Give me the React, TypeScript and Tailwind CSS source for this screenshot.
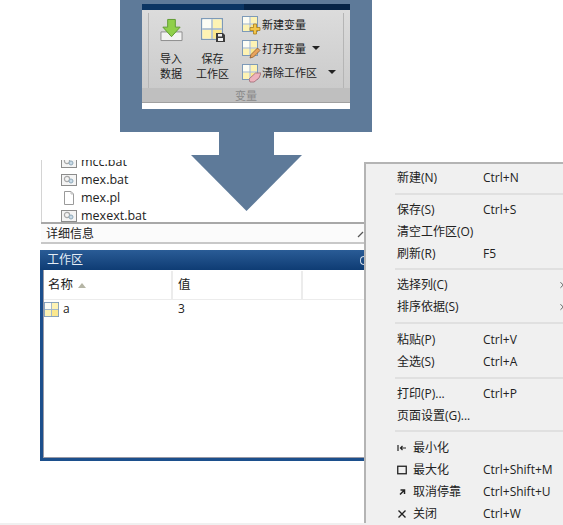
import { ChevronRight } from "lucide-react";

const cjk = "font-['Open_Sans','Noto_Sans_CJK_SC',sans-serif]";

const menuGroups = [
  { gap: "my-[4px]", items: [{ label: "新建(N)", key: "Ctrl+N" }] },
  {
    gap: "mt-[3px] mb-[4px]",
    items: [
      { label: "保存(S)", key: "Ctrl+S" },
      { label: "清空工作区(O)" },
      { label: "刷新(R)", key: "F5" },
    ],
  },
  {
    gap: "mt-[4px] mb-[5px]",
    items: [
      { label: "选择列(C)", arrow: true },
      { label: "排序依据(S)", arrow: true },
    ],
  },
  {
    gap: "my-[4px]",
    items: [
      { label: "粘贴(P)", key: "Ctrl+V" },
      { label: "全选(S)", key: "Ctrl+A" },
    ],
  },
  {
    gap: "mt-[3px] mb-[5px]",
    items: [
      { label: "打印(P)...", key: "Ctrl+P" },
      { label: "页面设置(G)..." },
    ],
  },
];

const windowItems = [
  { label: "最小化", icon: "min" },
  { label: "最大化", key: "Ctrl+Shift+M", icon: "max" },
  { label: "取消停靠", key: "Ctrl+Shift+U", icon: "undock" },
  { label: "关闭", key: "Ctrl+W", icon: "close" },
];

function GridIcon({ size = 16 }: { size?: number }) {
  return (
    <svg width={size} height={size} viewBox="0 0 16 16" className="shrink-0">
      <rect x="0.5" y="0.5" width="15" height="15" fill="#fff" stroke="#7d9ab8" />
      <rect x="1" y="1" width="6.5" height="6.5" fill="#fdfdf4" />
      <rect x="8.5" y="1" width="6.5" height="6.5" fill="#fdf3b4" />
      <rect x="1" y="8.5" width="6.5" height="6.5" fill="#fdf3b4" />
      <rect x="8.5" y="8.5" width="6.5" height="6.5" fill="#fbe88e" />
      <path d="M8 1V15M1 8H15" stroke="#9fb4c8" strokeWidth="1" />
    </svg>
  );
}

function FileIcon({ kind }: { kind: "bat" | "plain" }) {
  if (kind === "plain") {
    return (
      <svg width="16" height="16" viewBox="0 0 16 16">
        <path d="M3.5 1.5H10L12.5 4V14.5H3.5Z" fill="#fff" stroke="#9a9a9a" />
        <path d="M10 1.5V4H12.5" fill="none" stroke="#bdbdbd" />
      </svg>
    );
  }
  return (
    <svg width="16" height="16" viewBox="0 0 16 16">
      <rect x="0.5" y="2.5" width="15" height="11" fill="#f4f4f4" stroke="#8c8c8c" />
      <circle cx="6" cy="7" r="2.6" fill="none" stroke="#a8a8a8" strokeWidth="1.2" />
      <circle cx="10" cy="9" r="2" fill="#c9dbe8" stroke="#8fa9ba" />
    </svg>
  );
}

function WindowGlyph({ name }: { name: string }) {
  if (name === "min") {
    return (
      <svg width="10" height="10" viewBox="0 0 10 10">
        <path d="M1 2V8M9 5H3.5M5.5 3L3.5 5L5.5 7" fill="none" stroke="#222" strokeWidth="1.2" />
      </svg>
    );
  }
  if (name === "max") {
    return (
      <svg width="10" height="10" viewBox="0 0 10 10">
        <rect x="0.75" y="1.25" width="8.5" height="7.5" fill="none" stroke="#222" strokeWidth="1.3" />
      </svg>
    );
  }
  if (name === "undock") {
    return (
      <svg width="10" height="10" viewBox="0 0 10 10">
        <path d="M3.5 3H7.5V7M7 3.5L3 7.5" fill="none" stroke="#222" strokeWidth="1.5" />
      </svg>
    );
  }
  return (
    <svg width="10" height="10" viewBox="0 0 10 10">
      <path d="M1.5 1.5L8.5 8.5M8.5 1.5L1.5 8.5" fill="none" stroke="#222" strokeWidth="1.4" />
    </svg>
  );
}

function Caret() {
  return <span className="h-0 w-0 border-x-[4px] border-t-[4px] border-x-transparent border-t-[#222]" />;
}

function ToolRow({ label, badge, caretGap }: { label: string; badge: "add" | "pen" | "erase"; caretGap?: string }) {
  return (
    <div className="flex h-[24px] items-center">
      <div className="relative mr-[4px] h-[16px] w-[16px]">
        <GridIcon />
        <svg width="12" height="12" viewBox="0 0 12 12" className="absolute -bottom-[3px] -right-[3px]">
          {badge === "add" && <path d="M4.5 1H7.5V4.5H11V7.5H7.5V11H4.5V7.5H1V4.5H4.5Z" fill="#f3c64a" stroke="#a87f1c" strokeWidth="0.8" />}
          {badge === "pen" && <path d="M1 11L2 7.5L8.5 1L11 3.5L4.5 10Z" fill="#e8a35c" stroke="#8d5a2b" strokeWidth="0.8" />}
          {badge === "erase" && <path d="M0 8L6.5 2H12L10 7L5 11H1Z" fill="#eeb2bd" stroke="#a06a75" strokeWidth="0.8" />}
        </svg>
      </div>
      <span className="text-[11px] leading-none text-[#222]">{label}</span>
      {caretGap && <span className={`flex ${caretGap}`}><Caret /></span>}
    </div>
  );
}

function Ribbon() {
  return (
    <div className={`${cjk} flex h-[105px] w-[208px] flex-col bg-white`}>
      <div className="flex h-[6px] shrink-0">
        <div className="w-[102px] bg-[#0b3563]" />
        <div className="flex-1 bg-[#062447]" />
      </div>
      <div className="flex h-[78px] shrink-0 bg-gradient-to-b from-[#dcdcdc] to-[#cbcbcb] px-[6px] pt-[3px]">
        <div className="flex h-full flex-1 border-x border-[#b5b5b5]">
          <div className="flex w-[44px] flex-col items-center pt-[5px]">
            <svg width="23" height="24" viewBox="0 0 24 24">
              <path d="M1 14H23V23H1Z" fill="#f2f2f2" stroke="#8c8c8c" />
              <path d="M8 1H16V9H21L12 19L3 9H8Z" fill="#8fcf4a" stroke="#5e9a30" />
            </svg>
            <div className="mt-[9px] text-center text-[11px] leading-[15px] text-[#222]">导入<br />数据</div>
          </div>
          <div className="flex w-[39px] flex-col items-center pt-[5px]">
            <div className="relative h-[23px] w-[23px]">
              <GridIcon size={22} />
              <svg width="9" height="9" viewBox="0 0 9 9" className="absolute -bottom-[1px] -right-[1px]">
                <path d="M0 0H7L9 2V9H0Z" fill="#3c3c3c" />
                <rect x="2" y="1" width="4" height="2.5" fill="#eee" />
                <rect x="2" y="5" width="5" height="3" fill="#eee" />
              </svg>
            </div>
            <div className="mt-[10px] whitespace-nowrap text-center text-[11px] leading-[15px] text-[#222]">保存<br />工作区</div>
          </div>
          <div className="-mt-[1px] flex flex-col pl-[10px]">
            <ToolRow label="新建变量" badge="add" />
            <ToolRow label="打开变量" badge="pen" caretGap="ml-[6px]" />
            <ToolRow label="清除工作区" badge="erase" caretGap="ml-[11px]" />
          </div>
        </div>
      </div>
      <div className="flex h-[15px] shrink-0 items-center justify-center border-b border-[#a0a0a0] bg-[#bfbfbf] text-[11px] leading-none text-[#8a8a8a]">
        变量
      </div>
    </div>
  );
}

function Arrow() {
  return (
    <div className="absolute left-[120px] top-0 flex w-[252px] flex-col items-center">
      <div className="flex h-[132px] w-full justify-center bg-[#5e7a99] pt-[4px]">
        <Ribbon />
      </div>
      <div className="h-[23px] w-[55px] bg-[#5e7a99]" />
      <svg width="111" height="56" viewBox="0 0 111 56" className="block">
        <path d="M0 0H111L55.5 56Z" fill="#5e7a99" />
      </svg>
    </div>
  );
}

function Workspace() {
  return (
    <div className="mt-[6px] -ml-[1px] flex h-[211px] flex-col border-b-[3px] border-l-[3px] border-[#1c4f8c]">
      <div className="-ml-[3px] flex h-[20px] shrink-0 items-center justify-between bg-gradient-to-b from-[#2a5c96] to-[#0e3c74] pl-[4px] text-[12px] leading-none text-[#e6edf5]">
        <span className="pl-[3px]">工作区</span>
        <span className="h-[9px] w-[4px] rounded-l-full border-y border-l border-[#cfdbe8]" />
      </div>
      <div className="flex flex-1 flex-col border-b border-l border-[#9a9aa5] bg-white">
        <div className="flex h-[30px] shrink-0 border-b border-[#ececec] pt-[1px] text-[12.5px] text-[#222]">
          <div className="flex w-[129px] items-center gap-[5px] border-r-2 border-[#ececec] pl-[4px]">
            名称
            <span className="h-0 w-0 border-x-[4px] border-b-[5px] border-x-transparent border-b-[#b5b5a5]" />
          </div>
          <div className="flex w-[130px] items-center border-r-2 border-[#ececec] pl-[5px]">值</div>
        </div>
        <div className="flex h-[18px] items-center text-[12px] text-[#222]">
          <GridIcon size={15} />
          <span className="ml-[4px] w-[115px]">a</span>
          <span>3</span>
        </div>
      </div>
    </div>
  );
}

function LeftPane() {
  return (
    <div className="w-[364px] shrink-0 pl-[41px] pt-[160px]">
      <div className="h-[62px] overflow-hidden border-l border-[#d4d4d4]">
        <div className="-mt-[7px] text-[12.5px] text-[#222]">
          {[
            { name: "mcc.bat", kind: "bat" as const },
            { name: "mex.bat", kind: "bat" as const },
            { name: "mex.pl", kind: "plain" as const },
            { name: "mexext.bat", kind: "bat" as const },
          ].map((f) => (
            <div key={f.name} className="flex h-[18px] items-center gap-[4px] pl-[19px]">
              <FileIcon kind={f.kind} />
              <span>{f.name}</span>
            </div>
          ))}
        </div>
      </div>
      <div className="flex h-[22px] items-center justify-between border-y-2 border-t-[#a8a8a8] border-b-[#c8c8c8] bg-[#fbfbfb] pl-[5px] pt-[2px] text-[12px] leading-none text-[#222]">
        详细信息
        <svg width="7" height="8" viewBox="0 0 7 8"><path d="M1 7L6 2" stroke="#555" strokeWidth="1.3" /></svg>
      </div>
      <Workspace />
    </div>
  );
}

function MenuRow({ label, shortcut, arrow, icon }: { label: string; shortcut?: string; arrow?: boolean; icon?: string }) {
  return (
    <div className="flex h-[22px] items-center whitespace-nowrap text-[12px] leading-none text-[#222]">
      <span className="flex w-[117px] items-center pl-[31px]">
        {icon && <span className="mr-[6px] flex"><WindowGlyph name={icon} /></span>}
        {label}
      </span>
      {shortcut && <span>{shortcut}</span>}
      {arrow && <ChevronRight size={10} className="ml-auto -mr-[4px] text-[#444]" />}
    </div>
  );
}

function ContextMenu() {
  return (
    <div className="mt-[162px] h-[361px] w-[199px] overflow-hidden border-l-2 border-t-2 border-[#b4b4b4] bg-[#f0f0f0] pt-[3px]">
      {menuGroups.map((group, i) => (
        <div key={i}>
          {group.items.map((item) => (
            <MenuRow key={item.label} label={item.label} shortcut={item.key} arrow={item.arrow} />
          ))}
          <div className={`${group.gap} ml-[29px] h-[2px] bg-[#e0e0e0]`} />
        </div>
      ))}
      {windowItems.map((item) => (
        <MenuRow key={item.label} label={item.label} shortcut={item.key} icon={item.icon} />
      ))}
    </div>
  );
}

export default function App() {
  return (
    <div className={`${cjk} relative h-[525px] w-[563px] overflow-hidden bg-white`}>
      <div className="flex h-[523px] items-start">
        <LeftPane />
        <ContextMenu />
      </div>
      <div className="h-[2px] bg-[#f0f0f0]" />
      <Arrow />
    </div>
  );
}
